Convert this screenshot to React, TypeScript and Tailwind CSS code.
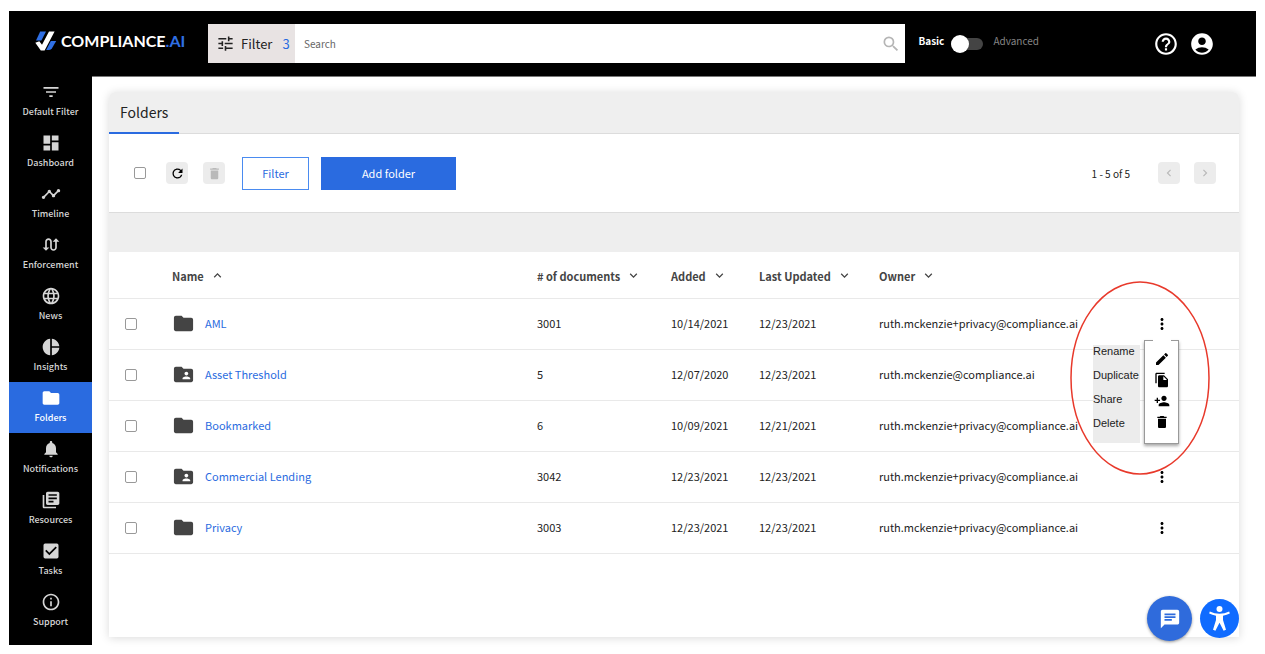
import React from 'react';
import {
  MdAccountCircle,
  MdChat,
  MdCheckBox,
  MdChevronLeft,
  MdChevronRight,
  MdDashboard,
  MdDelete,
  MdEdit,
  MdExpandLess,
  MdExpandMore,
  MdFileCopy,
  MdFilterList,
  MdFolder,
  MdFolderShared,
  MdHelpOutline,
  MdInfoOutline,
  MdLanguage,
  MdLibraryBooks,
  MdMoreVert,
  MdNotifications,
  MdPersonAdd,
  MdPieChart,
  MdRefresh,
  MdSearch,
  MdSwapCalls,
  MdTimeline,
  MdTune,
} from 'react-icons/md';

const NAV_ITEMS = [
  { label: 'Default Filter', Icon: MdFilterList },
  { label: 'Dashboard', Icon: MdDashboard },
  { label: 'Timeline', Icon: MdTimeline },
  { label: 'Enforcement', Icon: MdSwapCalls },
  { label: 'News', Icon: MdLanguage },
  { label: 'Insights', Icon: MdPieChart },
  { label: 'Folders', Icon: MdFolder },
  { label: 'Notifications', Icon: MdNotifications },
  { label: 'Resources', Icon: MdLibraryBooks },
  { label: 'Tasks', Icon: MdCheckBox },
  { label: 'Support', Icon: MdInfoOutline },
];

const COLUMNS = [
  { label: 'Name', width: '', Icon: MdExpandLess },
  { label: '# of documents', width: 'w-[134px]', Icon: MdExpandMore },
  { label: 'Added', width: 'w-[88px]', Icon: MdExpandMore },
  { label: 'Last Updated', width: 'w-[120px]', Icon: MdExpandMore },
  { label: 'Owner', width: 'w-[258px]', Icon: MdExpandMore },
];

const FOLDERS = [
  { name: 'AML', shared: false, docs: 3001, added: '10/14/2021', updated: '12/23/2021', owner: 'ruth.mckenzie+privacy@compliance.ai' },
  { name: 'Asset Threshold', shared: true, docs: 5, added: '12/07/2020', updated: '12/23/2021', owner: 'ruth.mckenzie@compliance.ai' },
  { name: 'Bookmarked', shared: false, docs: 6, added: '10/09/2021', updated: '12/21/2021', owner: 'ruth.mckenzie+privacy@compliance.ai' },
  { name: 'Commercial Lending', shared: true, docs: 3042, added: '12/23/2021', updated: '12/23/2021', owner: 'ruth.mckenzie+privacy@compliance.ai' },
  { name: 'Privacy', shared: false, docs: 3003, added: '12/23/2021', updated: '12/23/2021', owner: 'ruth.mckenzie+privacy@compliance.ai' },
];

const ROW_ACTIONS = [
  { label: 'Rename', Icon: MdEdit },
  { label: 'Duplicate', Icon: MdFileCopy },
  { label: 'Share', Icon: MdPersonAdd },
  { label: 'Delete', Icon: MdDelete },
];

const CHECKBOX = 'block h-3 w-3 appearance-none rounded-[2px] border border-[#999] bg-white checked:bg-[#2a6be0]';

const Logo: React.FC = () => (
  <a href="#" className="flex items-center gap-1 text-white">
    <svg width="22" height="20" viewBox="0 0 22 20" aria-hidden="true">
      <path d="M5.200 0.500H11L6.400 9.400H1Z" fill="#2f6fe4" />
      <path d="M0.300 11.800L4.300 10.200L7 13.800L14 0.500H19.600L9.600 19.500H5.800Z" fill="#fff" />
      <path d="M15.800 10H21.200L17 17.200Q16 18.900 14 18.900H11.200Z" fill="#2f6fe4" />
    </svg>
    <span className="font-['Lato',sans-serif] text-base leading-5 font-bold">
      COMPLIANCE<span className="text-[#2f6fe4]">.AI</span>
    </span>
  </a>
);

const Header: React.FC = () => (
  <header className="flex h-[66px] items-center border-b border-[#777] bg-black pr-[41px] pl-[26px]">
    <div className="w-[173px] shrink-0 pb-1.5">
      <Logo />
    </div>

    <button className="flex h-[39px] w-[87px] shrink-0 items-center bg-[#e8e3e3] pl-2 text-[13px] text-[#222]">
      <MdTune size={19} />
      <span className="ml-1.5">Filter</span>
      <span className="ml-2.5 text-[#2a6be0]">3</span>
    </button>
    <div className="flex h-[39px] flex-1 items-center bg-white pr-1 pl-[9px]">
      <input
        type="search"
        aria-label="Search"
        placeholder="Search"
        className="min-w-0 flex-1 text-[10px] outline-none placeholder:text-[#666]"
      />
      <button aria-label="Run search" className="text-[#b5b5b5]">
        <MdSearch size={20} />
      </button>
    </div>

    <label className="ml-[13px] flex items-center text-[10px] text-[#858585]">
      <span className="pb-1.5 font-bold text-white">Basic</span>
      <input
        type="checkbox"
        role="switch"
        aria-label="Advanced mode"
        className="mr-2.5 ml-[7px] flex h-3 w-8 appearance-none items-center rounded-full bg-[#444] before:h-[18px] before:w-[18px] before:rounded-full before:bg-white"
      />
      <span className="pb-1.5">Advanced</span>
    </label>

    <div className="ml-[114px] flex items-center gap-2.5 text-white">
      <button aria-label="Help"><MdHelpOutline size={26} /></button>
      <button aria-label="Account"><MdAccountCircle size={26} /></button>
    </div>
  </header>
);

const Sidebar: React.FC = () => (
  <nav className="-mt-px w-[83px] shrink-0 bg-black">
    {NAV_ITEMS.map(({ label, Icon }) => {
      const active = label === 'Folders';
      return (
        <a
          key={label}
          href="#"
          className={`flex h-[51px] flex-col items-center pt-1.5 ${active ? 'bg-[#2a6be0] text-white' : 'text-[#d6d6d6]'}`}
        >
          <Icon size={20} />
          <span className="text-[9px] leading-5 font-medium">{label}</span>
        </a>
      );
    })}
  </nav>
);

const Toolbar: React.FC = () => (
  <div className="flex h-[79px] items-center border-b border-[#dcdcdc] pr-[23px] pl-[25px]">
    <input type="checkbox" aria-label="Select all folders" className={CHECKBOX} />
    <button aria-label="Refresh" className="ml-5 flex h-[22px] w-[22px] items-center justify-center rounded bg-[#ececec] text-black">
      <MdRefresh size={15} />
    </button>
    <button aria-label="Delete selected" className="ml-[15px] flex h-[22px] w-[22px] items-center justify-center rounded bg-[#ececec] text-[#b9b9b9]">
      <MdDelete size={15} />
    </button>
    <button className="ml-[17px] h-[33px] w-[67px] border border-[#4a8bf0] text-[11px] text-[#2a6be0]">Filter</button>
    <button className="ml-3 h-[33px] w-[135px] bg-[#2a6be0] text-[11px] text-white">Add folder</button>

    <span className="ml-auto text-[10px]">1 - 5 of 5</span>
    <button aria-label="Previous page" className="ml-7 flex h-[22px] w-[22px] items-center justify-center rounded bg-[#ececec] text-[#b9b9b9]">
      <MdChevronLeft size={14} />
    </button>
    <button aria-label="Next page" className="ml-3.5 flex h-[22px] w-[22px] items-center justify-center rounded bg-[#ececec] text-[#b9b9b9]">
      <MdChevronRight size={14} />
    </button>
  </div>
);

// Opened below the kebab of a row, with its captions on the left
const RowMenu: React.FC = () => (
  <>
    <div className="absolute top-[46px] -left-11 z-10 h-[98px] w-[47px] bg-[#ececec] font-['Liberation_Sans',sans-serif] text-[11px] leading-6 text-[#222]">
      <div className="-mt-1.5">
        {ROW_ACTIONS.map(({ label }) => (
          <div key={label}>{label}</div>
        ))}
      </div>
    </div>
    <div className="absolute top-[41px] left-[7px] z-10 flex h-[104px] w-[35px] flex-col items-center border border-[#999] bg-white pt-2 text-black shadow-[0_2px_3px_rgba(0,0,0,0.35)]">
      {ROW_ACTIONS.map(({ label, Icon }) => (
        <button key={label} aria-label={label} className="flex h-[21px] items-center">
          <Icon size={16} />
        </button>
      ))}
    </div>
    <svg className="pointer-events-none absolute -top-[18px] -left-[67px] z-30" width="140" height="195" viewBox="0 0 140 195" aria-hidden="true">
      <ellipse cx="70" cy="97" rx="69" ry="96" fill="none" stroke="#e8392b" strokeWidth="1.500" />
    </svg>
  </>
);

const FolderTable: React.FC = () => (
  <table className="w-full table-fixed text-left text-[11px] text-[#222]">
    <thead>
      <tr className="h-[46px] border-b border-[#e9e9e9] text-[#444]">
        <th aria-label="Select" className="w-[63px]" />
        {COLUMNS.map(({ label, width, Icon }) => (
          <th key={label} className={`${width} font-bold`}>
            <button className="flex items-start gap-1.5 pt-0.5 whitespace-nowrap">
              {label}
              <Icon size={15} />
            </button>
          </th>
        ))}
        <th aria-label="Actions" className="w-[102px]" />
      </tr>
    </thead>
    <tbody>
      {FOLDERS.map((folder, i) => (
        <tr key={folder.name} className="h-[51px] border-b border-[#e9e9e9]">
          <td className="pl-4">
            <input type="checkbox" aria-label={`Select ${folder.name}`} className={CHECKBOX} />
          </td>
          <td>
            <a href="#" className="flex items-center gap-2.5 text-[#2a6be0]">
              {folder.shared ? <MdFolderShared size={23} color="#444" /> : <MdFolder size={23} color="#444" />}
              {folder.name}
            </a>
          </td>
          <td>{folder.docs}</td>
          <td>{folder.added}</td>
          <td>{folder.updated}</td>
          <td>{folder.owner}</td>
          <td className="relative">
            {i === 0 && <RowMenu />}
            <button
              aria-label={`Actions for ${folder.name}`}
              className={`ml-4 flex h-9 w-[18px] items-center justify-center text-black ${i === 0 ? 'relative z-20 bg-white' : ''}`}
            >
              <MdMoreVert size={18} />
            </button>
          </td>
        </tr>
      ))}
    </tbody>
  </table>
);

const App: React.FC = () => (
  <div className="flex min-h-screen flex-col bg-white px-[9px] pt-[11px] pb-[9px] font-['Noto_Sans_CJK_SC',sans-serif] text-[#222]">
    <Header />
    <div className="flex flex-1">
      <Sidebar />
      <main className="flex flex-1 flex-col px-[17px] pt-[15px] pb-2">
        <section className="flex-1 rounded-t-md bg-white shadow-[0_1px_10px_rgba(0,0,0,0.15)]">
          <div className="flex h-[42px] rounded-t-md border-b border-[#dcdcdc] bg-[#efefef]">
            <h1 className="-mb-px flex items-center border-b-2 border-[#2a6be0] px-[11px] text-sm">Folders</h1>
          </div>
          <Toolbar />
          <div className="h-[39px] bg-[#eeeeee]" />
          <FolderTable />
        </section>
      </main>
    </div>

    {/* Floating help buttons */}
    <div className="fixed right-[26px] bottom-[13px] z-40 flex items-center gap-2 text-white">
      <button aria-label="Open chat" className="flex h-[45px] w-[45px] items-center justify-center rounded-full bg-[#2f6bdc] shadow-[0_1px_3px_rgba(0,0,0,0.4)]">
        <MdChat size={22} />
      </button>
      <button aria-label="Accessibility options" className="flex h-[39px] w-[39px] items-center justify-center rounded-full bg-[#0f6bff]">
        <svg width="39" height="39" viewBox="0 0 39 39" fill="currentColor" aria-hidden="true">
          <circle cx="19.500" cy="10" r="3" />
          <path d="M9.800 12.600Q14.500 14.800 19.500 14.800T29.200 12.600L29.800 14.600Q26.800 16.200 23 16.800V21L26 30.800L23.600 31.800L19.500 23.800L15.400 31.800L13 30.800L16 21V16.800Q12.200 16.200 9.200 14.600Z" />
        </svg>
      </button>
    </div>
  </div>
);

export default App;
